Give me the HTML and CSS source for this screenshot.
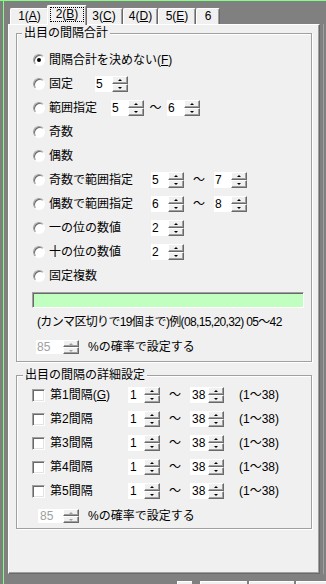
FILE: index.html
```html
<!DOCTYPE html>
<html lang="ja">
<head>
    <meta charset="UTF-8">
    <title>出目の間隔設定</title>
    <link rel="stylesheet" href="styles.css">
</head>
<body>
    <div class="frame">
        <div class="tabs">
            <div class="tab t1">1(<u>A</u>)</div>
            <div class="tab t2 active"><span class="focus">2(<u>B</u>)</span></div>
            <div class="tab t3">3(<u>C</u>)</div>
            <div class="tab t4">4(<u>D</u>)</div>
            <div class="tab t5">5(<u>E</u>)</div>
            <div class="tab t6">6</div>
        </div>

        <div class="panel">
            <!-- 出目の間隔合計 -->
            <div class="group g1">
                <div class="legend">出目の間隔合計</div>
                <div class="rows">
                    <div class="row"><span class="radio on"></span><span class="label">間隔合計を決めない(<u>F</u>)</span></div>
                    <div class="row"><span class="radio"></span><span class="label w-short">固定</span><span class="num">5</span><span class="spin"><i class="up"></i><i class="down"></i></span></div>
                    <div class="row"><span class="radio"></span><span class="label w-mid">範囲指定</span><span class="num">5</span><span class="spin"><i class="up"></i><i class="down"></i></span><span class="tilde">〜</span><span class="num">6</span><span class="spin"><i class="up"></i><i class="down"></i></span></div>
                    <div class="row"><span class="radio"></span><span class="label">奇数</span></div>
                    <div class="row"><span class="radio"></span><span class="label">偶数</span></div>
                    <div class="row"><span class="radio"></span><span class="label w-long">奇数で範囲指定</span><span class="num">5</span><span class="spin"><i class="up"></i><i class="down"></i></span><span class="tilde wide">〜</span><span class="num">7</span><span class="spin"><i class="up"></i><i class="down"></i></span></div>
                    <div class="row"><span class="radio"></span><span class="label w-long">偶数で範囲指定</span><span class="num">6</span><span class="spin"><i class="up"></i><i class="down"></i></span><span class="tilde wide">〜</span><span class="num">8</span><span class="spin"><i class="up"></i><i class="down"></i></span></div>
                    <div class="row"><span class="radio"></span><span class="label w-long">一の位の数値</span><span class="num">2</span><span class="spin"><i class="up"></i><i class="down"></i></span></div>
                    <div class="row"><span class="radio"></span><span class="label w-long">十の位の数値</span><span class="num">2</span><span class="spin"><i class="up"></i><i class="down"></i></span></div>
                    <div class="row"><span class="radio"></span><span class="label">固定複数</span></div>
                </div>
                <div class="green-input"></div>
                <div class="hint">(カンマ区切りで19個まで)例(08,15,20,32) 05〜42</div>
                <div class="prob">
                    <span class="num disabled">85</span><span class="spin small off"><i class="up"></i><i class="down"></i></span>
                    <span class="prob-text">%の確率で設定する</span>
                </div>
            </div>

            <!-- 出目の間隔の詳細設定 -->
            <div class="group g2">
                <div class="legend">出目の間隔の詳細設定</div>
                <div class="rows">
                    <div class="row check-row"><span class="check"></span><span class="label w-check">第1間隔(<u>G</u>)</span><span class="num n1">1</span><span class="spin"><i class="up"></i><i class="down"></i></span><span class="tilde wide">〜</span><span class="num n2">38</span><span class="spin"><i class="up"></i><i class="down"></i></span><span class="range">(1〜38)</span></div>
                    <div class="row check-row"><span class="check"></span><span class="label w-check">第2間隔</span><span class="num n1">1</span><span class="spin"><i class="up"></i><i class="down"></i></span><span class="tilde wide">〜</span><span class="num n2">38</span><span class="spin"><i class="up"></i><i class="down"></i></span><span class="range">(1〜38)</span></div>
                    <div class="row check-row"><span class="check"></span><span class="label w-check">第3間隔</span><span class="num n1">1</span><span class="spin"><i class="up"></i><i class="down"></i></span><span class="tilde wide">〜</span><span class="num n2">38</span><span class="spin"><i class="up"></i><i class="down"></i></span><span class="range">(1〜38)</span></div>
                    <div class="row check-row"><span class="check"></span><span class="label w-check">第4間隔</span><span class="num n1">1</span><span class="spin"><i class="up"></i><i class="down"></i></span><span class="tilde wide">〜</span><span class="num n2">38</span><span class="spin"><i class="up"></i><i class="down"></i></span><span class="range">(1〜38)</span></div>
                    <div class="row check-row"><span class="check"></span><span class="label w-check">第5間隔</span><span class="num n1">1</span><span class="spin"><i class="up"></i><i class="down"></i></span><span class="tilde wide">〜</span><span class="num n2">38</span><span class="spin"><i class="up"></i><i class="down"></i></span><span class="range">(1〜38)</span></div>
                </div>
                <div class="prob prob2">
                    <span class="num disabled">85</span><span class="spin small off"><i class="up"></i><i class="down"></i></span>
                    <span class="prob-text">%の確率で設定する</span>
                </div>
            </div>
        </div>

        <div class="footer">
            <span class="fbtn b1"></span>
            <span class="fbtn b2"></span>
            <span class="fbtn b3"></span>
            <span class="fbtn b4"></span>
        </div>
    </div>
</body>
</html>
```

FILE: styles.css
```css
* {
    box-sizing: border-box;
}

body {
    margin: 0;
    width: 326px;
    height: 584px;
    overflow: hidden;
    background: #808080;
    border-top: 1px solid #80ff80;
    font-family: "Liberation Sans", "Noto Sans CJK JP", sans-serif;
    font-size: 12px;
    color: #000;
}

.frame {
    margin-left: 3px;
    border-left: 1px solid #80ff80;
    padding-left: 4px;
    height: 583px;
}

/* Tabs */
.tabs {
    display: flex;
    align-items: flex-end;
    height: 23px;
    padding-left: 2px;
}

.tab {
    height: 16px;
    background: #f0f0f0;
    border-top: 1px solid #fff;
    border-left: 1px solid #fff;
    border-right: 1px solid #696969;
    box-shadow: inset -1px 0 0 #a0a0a0;
    border-radius: 2px 2px 0 0;
    text-align: center;
    line-height: 14px;
}

.t1 { width: 39px; }
.t3 { width: 38px; }
.t4 { width: 35px; }
.t5 { width: 38px; }
.t6 { width: 24px; }

.tab.active {
    width: 40px;
    height: 20px;
    margin: 0 -2px -1px;
    position: relative;
    z-index: 1;
    padding: 1px 2px 0 2px;
}

.focus {
    display: block;
    border: 1px dotted #000;
    line-height: 13px;
    height: 15px;
}

/* Panel */
.panel {
    width: 312px;
    height: 550px;
    background: #f0f0f0;
    border: 1px solid;
    border-color: #fff #696969 #696969 #fff;
    box-shadow: inset -1px -1px 0 #a0a0a0, 3px 0 0 #808080, 4px 0 0 #a0a0a0;
    padding: 0 7px;
}

.group {
    border: 1px solid #a0a0a0;
    box-shadow: inset 1px 1px 0 #fff, 1px 1px 0 #fff;
}

.g1 {
    margin-top: 8px;
    padding-bottom: 6px;
}

.g2 {
    margin-top: 13px;
    padding-bottom: 4px;
}

.legend {
    width: fit-content;
    margin: -8px 0 0 5px;
    padding: 0 2px;
    background: #f0f0f0;
    line-height: 14px;
    height: 14px;
}

.g2 .legend {
    margin-left: 6px;
}

.g1 .rows {
    margin-top: 8px;
}

.g2 .rows {
    margin-top: 1px;
}

.row {
    display: flex;
    align-items: center;
    height: 24px;
    padding-left: 16px;
}

.row.check-row {
    padding-left: 15px;
}

.label {
    line-height: 14px;
    white-space: nowrap;
}

.w-short { width: 46px; }
.w-mid { width: 62px; }
.w-long { width: 102px; }
.w-check { width: 78px; }

/* Radio & checkbox */
.radio {
    width: 12px;
    height: 12px;
    border-radius: 50%;
    background: #fff;
    border: 1px solid;
    border-color: #a0a0a0 #fff #fff #a0a0a0;
    box-shadow: inset 1px 1px 0 #696969;
    margin-right: 4px;
    display: flex;
    align-items: center;
    justify-content: center;
    flex: none;
}

.radio.on::after {
    content: "";
    width: 4px;
    height: 4px;
    border-radius: 50%;
    background: #000;
}

.check {
    width: 13px;
    height: 13px;
    background: #fff;
    border: 1px solid;
    border-color: #a0a0a0 #fff #fff #a0a0a0;
    box-shadow: inset 1px 1px 0 #696969, inset -1px -1px 0 #e3e3e3;
    margin-right: 5px;
    flex: none;
}

/* Number boxes & spinners */
.num {
    width: 17px;
    height: 16px;
    background: #fff;
    line-height: 16px;
    padding-left: 1px;
    flex: none;
}

.num.n1 { width: 16px; padding-left: 2px; }
.num.n2 { width: 18px; padding-left: 2px; }

.num.disabled {
    width: 27px;
    height: 14px;
    line-height: 14px;
    color: #a0a0a0;
    padding-left: 1px;
}

.spin {
    display: flex;
    flex-direction: column;
    width: 16px;
    height: 16px;
    flex: none;
}

.spin i {
    height: 8px;
    background: #f0f0f0;
    border: 1px solid;
    border-color: #fff #696969 #696969 #fff;
    box-shadow: inset -1px -1px 0 #a0a0a0;
    display: flex;
    align-items: center;
    justify-content: center;
}

.spin.small {
    height: 14px;
}

.spin.small i {
    height: 7px;
}

.spin i::after {
    content: "";
    border-left: 2px solid transparent;
    border-right: 2px solid transparent;
}

.spin .up::after {
    border-bottom: 2px solid #000;
}

.spin .down::after {
    border-top: 2px solid #000;
}

.spin.off .up::after {
    border-bottom-color: #a0a0a0;
}

.spin.off .down::after {
    border-top-color: #a0a0a0;
}

.tilde {
    width: 23px;
    text-align: center;
    line-height: 14px;
    flex: none;
}

.tilde.wide {
    width: 30px;
}

.range {
    margin-left: 15px;
    line-height: 14px;
    white-space: nowrap;
}

/* Green list input */
.green-input {
    margin: 4px 0 0 15px;
    width: 272px;
    height: 16px;
    background: #c0ffc0;
    border: 1px solid;
    border-color: #a0a0a0 #fff #fff #a0a0a0;
    box-shadow: inset 1px 1px 0 #696969;
}

.hint {
    margin: 7px 0 0 20px;
    line-height: 14px;
    white-space: nowrap;
    letter-spacing: -0.65px;
}

.prob {
    display: flex;
    align-items: center;
    height: 16px;
    margin-top: 10px;
    padding-left: 19px;
}

.prob2 {
    margin-top: 5px;
    padding-left: 21px;
}

.prob2 .num.disabled {
    width: 25px;
    padding-left: 2px;
}

.prob-text {
    margin-left: 9px;
    line-height: 14px;
}

/* Buttons peeking in at the bottom */
.footer {
    display: flex;
    margin-top: 7px;
    height: 10px;
}

.fbtn {
    height: 10px;
    border-top: 1px solid #fff;
    border-left: 1px solid #fff;
    background: #f0f0f0;
}

.b1 { width: 15px; margin-left: 169px; }
.b2 { width: 47px; margin-left: 8px; }
.b3 { width: 46px; margin-left: 2px; }
.b4 { width: 30px; margin-left: 2px; }
```
